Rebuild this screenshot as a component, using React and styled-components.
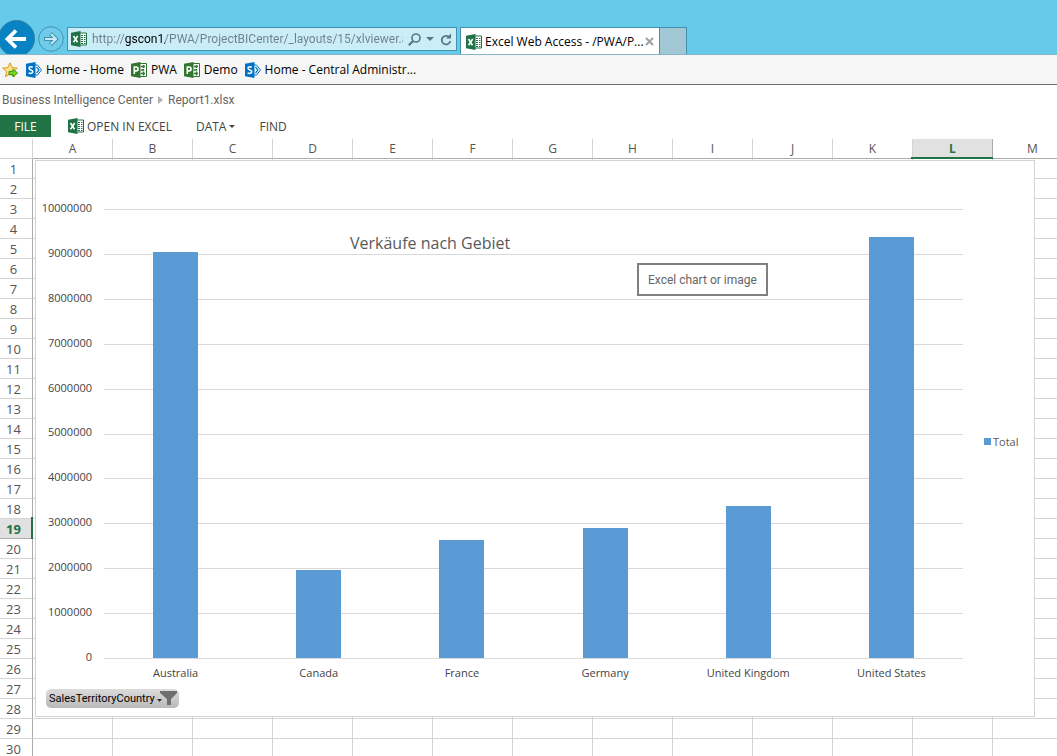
import React from 'react';
import styled, { createGlobalStyle } from 'styled-components';

const GlobalStyle = createGlobalStyle`
  * {
    box-sizing: border-box;
  }
  body {
    margin: 0;
    background: #fff;
    font-family: "Open Sans", "Noto Sans", sans-serif;
    font-size: 12px;
    color: #444;
  }
  button, input {
    font: inherit;
    color: inherit;
    border: 0;
    padding: 0;
    background: none;
  }
  a {
    color: inherit;
    text-decoration: none;
  }
`;

const Page = styled.div`
  display: flex;
  flex-direction: column;
  height: 100vh;
  overflow: hidden;
`;

/* browser frame */

const TitleBar = styled.header`
  display: flex;
  align-items: flex-start;
  height: 54px;
  padding-top: 20px;
  overflow: hidden;
  background: #66caea;
`;

const BackButton = styled.button`
  flex: none;
  width: 37px;
  height: 37px;
  margin-left: -2px;
`;

const ForwardButton = styled.button`
  flex: none;
  width: 26px;
  height: 26px;
  margin: 6px 3px 0;
`;

const AddressBar = styled.form`
  display: flex;
  align-items: center;
  width: 390px;
  height: 24px;
  margin: 7px 3px 0 0;
  padding: 0 2px 0 3px;
  border: 1px solid #4391ac;
  background: #caedf8;
  color: #5b7680;
`;

const AddressInput = styled.input`
  flex: 1;
  min-width: 0;
  height: 20px;
  margin: 0 3px 0 5px;
  outline: 0;
  background: linear-gradient(90deg, #6d8188 33px, #000 33px, #000 73px, #6d8188 73px);
  background-clip: text;
  -webkit-background-clip: text;
  color: transparent;
  font-family: Roboto, sans-serif;
`;

const BarButton = styled.button`
  display: flex;
  justify-content: center;
  width: ${props => props.$width}px;
`;

const Tab = styled.div`
  display: flex;
  align-items: center;
  width: 200px;
  height: 28px;
  margin-top: 7px;
  padding: 0 5px;
  border: 1px solid #4391ac;
  border-bottom: 0;
  background: #fff;
  color: #000;
  white-space: nowrap;
`;

const TabTitle = styled.span`
  flex: 1;
  margin-left: 3px;
`;

const NewTab = styled.button`
  width: 27px;
  height: 28px;
  margin-top: 7px;
  border: 1px solid #4391ac;
  border-left: 0;
  border-bottom: 0;
  background: #a1c6d4;
`;

const Favorites = styled.nav`
  display: flex;
  flex: none;
  align-items: center;
  gap: 7px;
  height: 31px;
  padding-left: 2px;
  border-top: 1px solid #86b4c6;
  border-bottom: 1px solid #6d6d6d;
  background: #f6f6f6;
  color: #000;
`;

const Favorite = styled.a`
  display: flex;
  align-items: center;
  gap: 4px;
  white-space: nowrap;
`;

/* excel web access */

const Breadcrumb = styled.div`
  display: flex;
  align-items: center;
  gap: 5px;
  height: 30px;
  padding-left: 2px;
  color: #666;
  font-family: Roboto, sans-serif;
`;

const Toolbar = styled.div`
  display: flex;
  flex: none;
  align-items: center;
  height: 22px;
  margin-bottom: 2px;
`;

const FileButton = styled.button`
  width: 51px;
  height: 22px;
  margin-right: 17px;
  background: #217346;
  color: #fff;
`;

const ToolButton = styled.button`
  display: flex;
  align-items: center;
  gap: 3px;
  margin-right: 24px;
  white-space: nowrap;
`;

const Sheet = styled.main`
  position: relative;
  flex: 1;
  min-height: 0;
  overflow: hidden;
`;

const Grid = styled.table`
  width: 1073px;
  table-layout: fixed;
  border-collapse: separate;
  border-spacing: 0;
`;

const Corner = styled.td`
  width: 33px;
  height: 20px;
  padding: 0;
  border-right: 1px solid #d4d4d4;
  border-bottom: 1px solid #d4d4d4;
`;

const ColHead = styled.th`
  position: relative;
  width: 80px;
  height: 20px;
  padding: 0;
  border-right: 1px solid ${props => (props.$active ? '#ababab' : '#d4d4d4')};
  border-bottom: 1px solid #ababab;
  background: ${props => (props.$active ? '#e1e1e1' : '#fff')};
  color: ${props => (props.$active ? '#217346' : '#555')};
  font-weight: ${props => (props.$active ? 700 : 400)};
  line-height: 18px;

  &::after {
    content: "";
    display: ${props => (props.$active ? 'block' : 'none')};
    position: absolute;
    left: -2px;
    right: -2px;
    bottom: -1px;
    height: 2px;
    background: #217346;
  }
`;

const RowHead = styled.th`
  position: relative;
  height: 20px;
  padding: 1px 5px 0 0;
  border-right: 1px solid #ababab;
  border-bottom: 1px solid ${props => (props.$active ? '#ababab' : '#d4d4d4')};
  background: ${props => (props.$active ? '#e1e1e1' : '#fff')};
  color: ${props => (props.$active ? '#217346' : '#555')};
  font-size: 13px;
  font-weight: ${props => (props.$active ? 700 : 400)};
  line-height: 18px;

  &::after {
    content: "";
    display: ${props => (props.$active ? 'block' : 'none')};
    position: absolute;
    top: -2px;
    right: -1px;
    bottom: -2px;
    width: 2px;
    background: #217346;
  }
`;

const Cell = styled.td`
  padding: 0;
  border-right: 1px solid #d4d4d4;
  border-bottom: 1px solid #d4d4d4;
`;

/* the chart floats over the cells */

const ChartFrame = styled.section`
  position: absolute;
  top: 21px;
  left: 35px;
  display: grid;
  grid-template-columns: 68px 859px 1fr;
  grid-template-rows: 497px 22px 1fr;
  width: 1000px;
  height: 557px;
  border: 1px solid #d4d4d4;
  background: #fff;
  color: #595959;
  font-size: 11px;
  line-height: 14px;
`;

const Axis = styled.div`
  display: flex;
  flex-direction: column;
  justify-content: space-between;
  height: 463px;
  margin-top: 40px;
  padding-right: 12px;
  text-align: right;
  color: #444;
`;

const Plot = styled.div`
  position: relative;
  display: flex;
  flex-direction: column;
  height: 450px;
  margin-top: 48px;
  border-bottom: 1px solid #d9d9d9;
`;

const GridLine = styled.div`
  flex: 1;
  border-top: 1px solid #d9d9d9;
`;

const Bars = styled.div`
  position: absolute;
  inset: 0;
  display: grid;
  grid-template-columns: repeat(6, 1fr);
  align-items: end;
  justify-items: center;
`;

const Bar = styled.div`
  width: 45px;
  background: #5b9bd5;
`;

const Categories = styled.div`
  grid-column: 2;
  grid-row: 2;
  display: grid;
  grid-template-columns: repeat(6, 1fr);
  padding-top: 8px;
  text-align: center;
  color: #444;
`;

const Legend = styled.div`
  display: flex;
  align-items: center;
  align-self: center;
  gap: 2px;
  padding: 64px 0 0 21px;
`;

const Swatch = styled.span`
  width: 7px;
  height: 7px;
  background: #5b9bd5;
`;

const ChartTitle = styled.h1`
  position: absolute;
  top: 70px;
  left: 314px;
  margin: 0;
  font-size: 16px;
  font-weight: 400;
  line-height: 24px;
`;

const Tooltip = styled.div`
  position: absolute;
  top: 102px;
  left: 601px;
  padding: 8px 9px 7px;
  border: 2px solid #808080;
  background: #fff;
  color: #666;
  font-family: Roboto, sans-serif;
  font-size: 12px;
  white-space: nowrap;
`;

const FieldButton = styled.button`
  grid-column: 1 / 3;
  grid-row: 3;
  display: flex;
  align-items: center;
  justify-content: space-between;
  width: 133px;
  height: 19px;
  margin: 9px 0 0 10px;
  padding: 0 2px 0 3px;
  border-radius: 5px;
  background: linear-gradient(#dcdcdc, #b9b9b9);
  color: #000;
  font-family: Roboto, sans-serif;
`;

const ExcelIcon = () => (
  <svg width="16" height="16" viewBox="0 0 16 16" aria-hidden="true">
    <path d="M8 2h7.500v12H8z" fill="#fff" stroke="#217346" />
    <path d="M10 4.500h2M13 4.500h1.500M10 6.500h2M13 6.500h1.500M10 8.500h2M13 8.500h1.500M10 10.500h2M13 10.500h1.500M10 12.500h2M13 12.500h1.500" stroke="#217346" />
    <path d="M0 1.700 9.500 0v16L0 14.300z" fill="#217346" />
    <path d="m2.500 5 4 6.200M6.700 5l-4.200 6.200" stroke="#fff" strokeWidth="1.600" />
  </svg>
);

const SharePointIcon = () => (
  <svg width="16" height="16" viewBox="0 0 16 16" aria-hidden="true">
    <path d="M9 3h2.500l4 5-4 5H9" fill="#fff" stroke="#0072c6" />
    <path d="m10.500 5 2.500 3-2.500 3" fill="none" stroke="#0072c6" strokeWidth="1.200" />
    <path d="M0 1.700 9.500 0v16L0 14.300z" fill="#0072c6" />
    <path d="M6.700 5.300C5.500 4.500 3 4.500 3 6.300c0 2 3.800 1.400 3.800 3.500 0 1.900-2.700 1.900-4.200 1" fill="none" stroke="#fff" strokeWidth="1.500" />
  </svg>
);

const ProjectIcon = () => (
  <svg width="16" height="16" viewBox="0 0 16 16" aria-hidden="true">
    <path d="M8 1.500h7.500v13H8z" fill="#fff" stroke="#31752f" />
    <path d="M10 4.500h4M12.500 3v3M10 8h2.500v-1M10 11.500h4M12.500 9.500v4" fill="none" stroke="#31752f" strokeWidth="1.400" />
    <path d="M0 1.700 9.500 0v16L0 14.300z" fill="#31752f" />
    <path d="M3.300 12V5h1.900c2.500 0 2.500 3.900 0 3.900H3.300" fill="none" stroke="#fff" strokeWidth="1.600" />
  </svg>
);

const AddFavoriteIcon = () => (
  <svg width="17" height="16" viewBox="0 0 17 16" aria-hidden="true">
    <path d="m8 .8 2.100 4.800 5.200.5-3.900 3.500 1.100 5.100L8 12l-4.500 2.700 1.100-5.100L.7 6.100l5.200-.5z" fill="#ffe680" stroke="#d99a1c" strokeLinejoin="round" />
    <path d="M7 9.300h4V7l4.500 4-4.500 4v-2.300H7z" fill="#7ed321" stroke="#2f9420" strokeLinejoin="round" />
  </svg>
);

const Caret = ({ size = 6 }) => (
  <svg width={size} height={size / 2} viewBox="0 0 6 3" aria-hidden="true">
    <path d="M0 0h6L3 3z" fill="currentColor" />
  </svg>
);

const columns = 'ABCDEFGHIJKLM'.split('');
const rows = Array.from({ length: 30 }, (_, i) => i + 1);
const ticks = Array.from({ length: 11 }, (_, i) => (10 - i) * 1000000);

const favorites = [
  { name: 'Home - Home', icon: <SharePointIcon /> },
  { name: 'PWA', icon: <ProjectIcon /> },
  { name: 'Demo', icon: <ProjectIcon /> },
  { name: 'Home - Central Administr...', icon: <SharePointIcon /> },
];

const sales = [
  { country: 'Australia', total: 9050000 },
  { country: 'Canada', total: 1970000 },
  { country: 'France', total: 2630000 },
  { country: 'Germany', total: 2900000 },
  { country: 'United Kingdom', total: 3390000 },
  { country: 'United States', total: 9380000 },
];

const Browser = () => (
  <>
    <TitleBar>
      <BackButton aria-label="Back">
        <svg width="37" height="37" viewBox="0 0 37 37">
          <circle cx="18.500" cy="18.500" r="18" fill="#0783c3" stroke="#347f9f" />
          <path d="M28 19H10M18 10.500 9.500 19l8.500 8.500" fill="none" stroke="#fff" strokeWidth="3.800" />
        </svg>
      </BackButton>
      <ForwardButton aria-label="Forward">
        <svg width="26" height="26" viewBox="0 0 26 26">
          <circle cx="13" cy="13" r="12.300" fill="#6fcbe9" stroke="#4391ac" />
          <path d="M6 13h11M12.500 7.500 18 13l-5.500 5.500" fill="none" stroke="#4391ac" strokeWidth="4" />
          <path d="M7 13h10M13 8l5 5-5 5" fill="none" stroke="#c5e9f5" strokeWidth="2" />
        </svg>
      </ForwardButton>
      <AddressBar onSubmit={e => e.preventDefault()}>
        <ExcelIcon />
        <AddressInput
          aria-label="Address"
          defaultValue="http://gscon1/PWA/ProjectBICenter/_layouts/15/xlviewer.aspx"
        />
        <BarButton type="button" $width={16} aria-label="Search">
          <svg width="13" height="13" viewBox="0 0 13 13" fill="none" stroke="currentColor">
            <circle cx="8" cy="5" r="4" strokeWidth="1.600" />
            <path d="M5 8 .800 12.200" strokeWidth="2.200" />
          </svg>
        </BarButton>
        <BarButton type="button" $width={16} aria-label="Show addresses">
          <Caret size={8} />
        </BarButton>
        <BarButton type="button" $width={16} aria-label="Refresh">
          <svg width="12" height="13" viewBox="0 0 12 13" fill="none" stroke="currentColor">
            <path d="M9.500 4.500A4.300 4.300 0 1 0 10.300 8" strokeWidth="1.800" />
            <path d="M11 .500v5H6z" fill="currentColor" stroke="none" />
          </svg>
        </BarButton>
      </AddressBar>
      <Tab>
        <ExcelIcon />
        <TabTitle>Excel Web Access - /PWA/P...</TabTitle>
        <BarButton $width={9} aria-label="Close tab">
          <svg width="9" height="9" viewBox="0 0 9 9">
            <path d="m1 1 7 7M8 1 1 8" stroke="#a0a0a0" strokeWidth="2" />
          </svg>
        </BarButton>
      </Tab>
      <NewTab aria-label="New tab" />
    </TitleBar>
    <Favorites>
      <AddFavoriteIcon />
      {favorites.map(fav => (
        <Favorite key={fav.name} href="#">
          {fav.icon}
          {fav.name}
        </Favorite>
      ))}
    </Favorites>
  </>
);

const Chart = () => (
  <ChartFrame>
    <Axis>
      {ticks.map(tick => <div key={tick}>{tick}</div>)}
    </Axis>
    <Plot>
      {ticks.slice(1).map(tick => <GridLine key={tick} />)}
      <Bars>
        {sales.map(item => (
          <Bar key={item.country} style={{ height: `${item.total / 100000}%` }} />
        ))}
      </Bars>
    </Plot>
    <Legend>
      <Swatch />
      Total
    </Legend>
    <Categories>
      {sales.map(item => <div key={item.country}>{item.country}</div>)}
    </Categories>
    <FieldButton>
      SalesTerritoryCountry
      <svg width="20" height="15" viewBox="0 0 20 15" aria-hidden="true">
        <path d="M0 8h5l-2.500 3z" fill="#333" />
        <path d="M3 0h17v2l-6 6v6h-4V8L3 2z" fill="#6e6e6e" />
      </svg>
    </FieldButton>
    <ChartTitle>Verkäufe nach Gebiet</ChartTitle>
    <Tooltip role="tooltip">Excel chart or image</Tooltip>
  </ChartFrame>
);

const App = () => {
  return (
    <Page>
      <GlobalStyle />
      <Browser />
      <Breadcrumb>
        <a href="#">Business Intelligence Center</a>
        <svg width="5" height="8" viewBox="0 0 5 8" aria-hidden="true">
          <path d="M0 0v8l5-4z" fill="#b0b0b0" />
        </svg>
        <span>Report1.xlsx</span>
      </Breadcrumb>
      <Toolbar>
        <FileButton>FILE</FileButton>
        <ToolButton>
          <ExcelIcon />
          OPEN IN EXCEL
        </ToolButton>
        <ToolButton>
          DATA
          <Caret />
        </ToolButton>
        <ToolButton>FIND</ToolButton>
      </Toolbar>
      <Sheet>
        <Grid>
          <thead>
            <tr>
              <Corner />
              {columns.map(col => (
                <ColHead key={col} scope="col" $active={col === 'L'}>{col}</ColHead>
              ))}
            </tr>
          </thead>
          <tbody>
            {rows.map(row => (
              <tr key={row}>
                <RowHead scope="row" $active={row === 19}>{row}</RowHead>
                {columns.map(col => <Cell key={col} />)}
              </tr>
            ))}
          </tbody>
        </Grid>
        <Chart />
      </Sheet>
    </Page>
  );
};

export default App;
